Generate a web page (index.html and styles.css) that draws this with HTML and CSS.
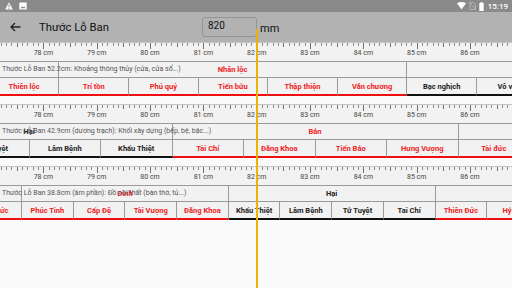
FILE: index.html
```html
<!DOCTYPE html>
<html lang="vi">
<head>
  <meta charset="UTF-8">
  <title>Thước Lỗ Ban</title>
  <meta name="viewport" content="width=device-width, initial-scale=1.0">
  <link rel="stylesheet" href="styles.css">
</head>
<body>
  <!-- Android status bar -->
  <div class="status-bar">
    <div class="status-left">
      <svg width="8" height="8" viewBox="0 0 8 8">
        <path d="M4 0.3 L7.8 7.5 L0.2 7.5 Z" fill="#fff"/>
        <rect x="3.5" y="2.6" width="1" height="2.8" fill="#8a8a8a"/>
        <rect x="3.5" y="6" width="1" height="0.9" fill="#8a8a8a"/>
      </svg>
      <svg width="8" height="8" viewBox="0 0 8 8">
        <rect x="0.3" y="0.5" width="7.4" height="7" rx="0.6" fill="#fff"/>
        <path d="M1.5 6.3 L3.4 4.2 L4.6 5.3 L5.4 4.6 L6.5 6.3 Z" fill="#8a8a8a"/>
      </svg>
    </div>
    <div class="status-right">
      <svg width="9" height="8" viewBox="0 0 9 8">
        <path d="M0 1.2 Q4.5 -1.2 9 1.2 L4.5 7.6 Z" fill="#fff"/>
      </svg>
      <svg width="7" height="8" viewBox="0 0 7 8">
        <path d="M1 0.5 H4.6 L6.3 2.2 V7.5 H1 Z" fill="none" stroke="#b8b8b8" stroke-width="0.9"/>
        <path d="M0.3 0.3 L6.7 7.7" stroke="#b8b8b8" stroke-width="0.9"/>
      </svg>
      <svg width="5" height="9" viewBox="0 0 5 9">
        <rect x="1.5" y="0" width="2" height="1" fill="#fff"/>
        <rect x="0.3" y="1" width="4.4" height="8" fill="#fff"/>
      </svg>
      <span class="clock">15:19</span>
    </div>
  </div>

  <!-- toolbar -->
  <header class="toolbar">
    <svg class="back" width="11" height="10" viewBox="0 0 11 10">
      <path d="M10.5 5 H1.2 M5 1 L1 5 L5 9" fill="none" stroke="#222" stroke-width="1.3"/>
    </svg>
    <span class="title">Thước Lỗ Ban</span>
    <div class="size-box">820</div>
    <span class="unit">mm</span>
  </header>

  <main class="rulers">
    <!-- 52.2cm -->
    <section class="ruler r52">
      <div class="scale">
        <div class="marks">
          <span>77 cm</span><span>78 cm</span><span>79 cm</span><span>80 cm</span><span>81 cm</span><span>82 cm</span>
          <span>83 cm</span><span>84 cm</span><span>85 cm</span><span>86 cm</span><span>87 cm</span>
        </div>
      </div>
      <div class="major-row">
        <div class="cells">
          <div class="major good">Thiên tài</div>
          <div class="major good">Nhân lộc</div>
          <div class="major bad">Cô độc</div>
        </div>
        <span class="desc">Thước Lỗ Ban 52.2cm: Khoảng thông thủy (cửa, cửa sổ...)</span>
      </div>
      <div class="sub-row">
        <div class="cells">
          <div class="sub good">Thiên lộc</div>
          <div class="sub good">Trí tồn</div>
          <div class="sub good">Phú quý</div>
          <div class="sub good">Tiến bửu</div>
          <div class="sub good">Thập thiện</div>
          <div class="sub good">Văn chương</div>
          <div class="sub bad">Bạc nghịch</div>
          <div class="sub bad">Vô vọng</div>
        </div>
      </div>
    </section>

    <!-- 42.9cm -->
    <section class="ruler r42">
      <div class="scale">
        <div class="marks">
          <span>77 cm</span><span>78 cm</span><span>79 cm</span><span>80 cm</span><span>81 cm</span><span>82 cm</span>
          <span>83 cm</span><span>84 cm</span><span>85 cm</span><span>86 cm</span><span>87 cm</span>
        </div>
      </div>
      <div class="major-row">
        <div class="cells">
          <div class="major bad">Hại</div>
          <div class="major good">Bản</div>
          <div class="major good">Tài</div>
        </div>
        <span class="desc">Thước Lỗ Ban 42.9cm (dương trạch): Khối xây dựng (bếp, bệ, bậc...)</span>
      </div>
      <div class="sub-row">
        <div class="cells">
          <div class="sub bad">Tử Tuyệt</div>
          <div class="sub bad">Lâm Bệnh</div>
          <div class="sub bad">Khẩu Thiệt</div>
          <div class="sub good">Tài Chí</div>
          <div class="sub good">Đăng Khoa</div>
          <div class="sub good">Tiến Bảo</div>
          <div class="sub good">Hưng Vượng</div>
          <div class="sub good">Tài đức</div>
        </div>
      </div>
    </section>

    <!-- 38.8cm -->
    <section class="ruler r38">
      <div class="scale">
        <div class="marks">
          <span>77 cm</span><span>78 cm</span><span>79 cm</span><span>80 cm</span><span>81 cm</span><span>82 cm</span>
          <span>83 cm</span><span>84 cm</span><span>85 cm</span><span>86 cm</span><span>87 cm</span>
        </div>
      </div>
      <div class="major-row">
        <div class="cells">
          <div class="major good">Tài</div>
          <div class="major good">Đinh</div>
          <div class="major bad">Hại</div>
          <div class="major good">Vượng</div>
        </div>
        <span class="desc">Thước Lỗ Ban 38.8cm (âm phần): Đồ nội thất (bàn thờ, tủ...)</span>
      </div>
      <div class="sub-row">
        <div class="cells">
          <div class="sub good">Tài Đức</div>
          <div class="sub good">Phúc Tinh</div>
          <div class="sub good">Cấp Đệ</div>
          <div class="sub good">Tài Vượng</div>
          <div class="sub good">Đăng Khoa</div>
          <div class="sub bad">Khẩu Thiệt</div>
          <div class="sub bad">Lâm Bệnh</div>
          <div class="sub bad">Tử Tuyệt</div>
          <div class="sub bad">Tai Chí</div>
          <div class="sub good">Thiên Đức</div>
          <div class="sub good">Hỷ Sự</div>
        </div>
      </div>
    </section>
  </main>

  <!-- measuring needle at 820mm -->
  <div class="needle"></div>
</body>
</html>
```

FILE: styles.css
```css
body {
  margin: 0;
  width: 512px;
  height: 288px;
  overflow: hidden;
  background: #fafafa;
  font-family: Roboto, 'Noto Sans', sans-serif;
  position: relative;
}

/* status bar */
.status-bar {
  height: 12px;
  background: #8a8a8a;
  display: flex;
  justify-content: space-between;
  align-items: center;
  padding: 0 4px 0 5px;
}
.status-left {
  display: flex;
  gap: 6px;
}
.status-right {
  display: flex;
  align-items: center;
  gap: 3px;
}
.clock {
  color: #fff;
  font-size: 8px;
  font-weight: 500;
  margin-left: 1px;
}

/* toolbar */
.toolbar {
  height: 30px;
  background: #b2b2b2;
  display: flex;
  align-items: center;
}
.back {
  margin-left: 10px;
}
.title {
  margin-left: 18px;
  font-size: 11.3px;
  color: #111;
  width: 163px;
}
.size-box {
  box-sizing: border-box;
  width: 55px;
  height: 20px;
  border: 1px solid #949494;
  border-radius: 3px;
  font-size: 10px;
  color: #111;
  padding: 2px 0 0 5px;
}
.unit {
  margin-left: 3px;
  margin-top: 3px;
  font-size: 11px;
  color: #111;
}

/* rulers */
.rulers {
  display: flex;
  flex-direction: column;
  gap: 8px;
}
.ruler {
  overflow: hidden;
  border-top: 1px solid #c4c4c4;
  background: #f2f2f2;
}

/* tick marks: cm, half cm, mm ; 82cm sits at x=256.7 */
.scale {
  height: 18px;
  border-bottom: 1px solid #9a9a9a;
  background-image:
    repeating-linear-gradient(to right, #707070 0 1px, transparent 1px 53.333px),
    repeating-linear-gradient(to right, #707070 0 1px, transparent 1px 26.667px),
    repeating-linear-gradient(to right, #8a8a8a 0 1px, transparent 1px 5.333px);
  background-size: calc(100% + 60px) 6px, calc(100% + 60px) 4px, calc(100% + 60px) 3px;
  background-position: -9.93px 0, -9.93px 0, -9.93px 0;
  background-repeat: no-repeat;
}
.marks {
  display: flex;
  margin-left: -36.6px;
  padding-top: 6px;
}
.marks span {
  flex: 0 0 53.333px;
  text-align: center;
  font-size: 7px;
  line-height: 9px;
  color: #444;
}

.major-row {
  display: grid;
  height: 15px;
  border-bottom: 1px solid #9a9a9a;
}
.major-row > * {
  grid-area: 1 / 1;
}
.desc {
  align-self: center;
  justify-self: start;
  padding-left: 2px;
  margin-top: -2px;
  font-size: 7px;
  color: #555;
  white-space: nowrap;
}
.sub-row {
  height: 18px;
}

.cells {
  display: flex;
  height: 100%;
}
.major, .sub {
  box-sizing: border-box;
  flex: none;
  display: flex;
  align-items: center;
  justify-content: center;
  border-right: 1px solid #9a9a9a;
  font-size: 7.5px;
  font-weight: 700;
  white-space: nowrap;
}
.sub {
  border-bottom: 2px solid #111;
}
.good {
  color: #ee1c24;
}
.bad {
  color: #222;
}
.sub.good {
  border-bottom-color: #ee1010;
}

/* 52.2cm: 8 cung x 5 */
.r52 .major { width: 348px; }
.r52 .sub { width: 69.6px; }
.r52 .major-row .cells { margin-left: -289px; }
.r52 .sub-row .cells { margin-left: -10.2px; }

/* 42.9cm: 8 cung x 4 */
.r42 .major { width: 286px; }
.r42 .sub { width: 71.5px; }
.r42 .major-row .cells { margin-left: -113.5px; }
.r42 .sub-row .cells { margin-left: -42px; }

/* 38.8cm: 10 cung x 4 */
.r38 .major { width: 206.8px; }
.r38 .sub { width: 51.7px; }
.r38 .major-row .cells { margin-left: -184.8px; }
.r38 .sub-row .cells { margin-left: -29.7px; }

.needle {
  position: absolute;
  left: 256px;
  top: 29px;
  bottom: 0;
  width: 1.5px;
  background: #f2b100;
}
```
